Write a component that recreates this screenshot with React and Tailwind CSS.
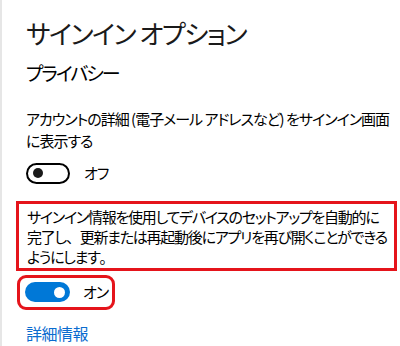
import React from "react";

const jp = "font-['Segoe_UI','Noto_Sans_CJK_JP',sans-serif] [font-feature-settings:'palt']";

const Toggle = ({ on }) => (
  <div
    className={
      on
        ? "flex h-[20px] w-[45px] items-center justify-end rounded-full bg-[#0078d7] pr-[5px]"
        : "flex h-[21px] w-[44px] items-center justify-start rounded-full border-2 border-black pl-[5px]"
    }
  >
    <div className={on ? "h-[11px] w-[11px] rounded-full bg-white" : "h-[10px] w-[10px] rounded-full bg-[#1a1a1a]"} />
  </div>
);

export default function App() {
  return (
    <div className={`h-[346px] w-[400px] overflow-hidden border-l-2 border-[#e6e6e6] bg-white text-black ${jp}`}>
      <div className="pl-[24px] pt-[16px]">
        <h1 className="text-[26px] leading-[34px] tracking-[-1.5px] text-[#1a1a1a]">サインイン オプション</h1>
        <h2 className="mt-[11px] text-[19px] leading-[24px] tracking-[-2px]">プライバシー</h2>

        <p className="mt-[23px] whitespace-nowrap text-[15px] leading-[22px] tracking-[-1px]">
          アカウントの詳細 (電子メール アドレスなど) をサインイン画面
          <br />
          に表示する
        </p>
        <div className="mt-[10px] flex items-center gap-[14px]">
          <Toggle on={false} />
          <span className="text-[15px] tracking-[-1px]">オフ</span>
        </div>
      </div>

      <div className="ml-[14px] mr-[3px] mt-[16px] border-[3px] border-[#e5141b] pb-[1px] pl-[8px] pt-[3px]">
        <p className="whitespace-nowrap text-[15px] leading-[20px] tracking-[-1.25px]">
          サインイン情報を使用してデバイスのセットアップを自動的に
          <br />
          完了し<span className="[font-feature-settings:normal]">、</span>更新または再起動後にアプリを再び開くことができる
          <br />
          ようにします<span className="[font-feature-settings:normal]">。</span>
        </p>
      </div>

      <div className="ml-[15px] mt-[4px] flex h-[35px] w-[98px] items-center gap-[13px] rounded-[9px] border-[3px] border-[#e5141b] pl-[5px]">
        <Toggle on />
        <span className="text-[15px] tracking-[-1px]">オン</span>
      </div>

      <a className="ml-[24px] mt-[13px] block text-[16px] leading-[20px] tracking-[-0.5px] text-[#0a6ccf]">詳細情報</a>
    </div>
  );
}
